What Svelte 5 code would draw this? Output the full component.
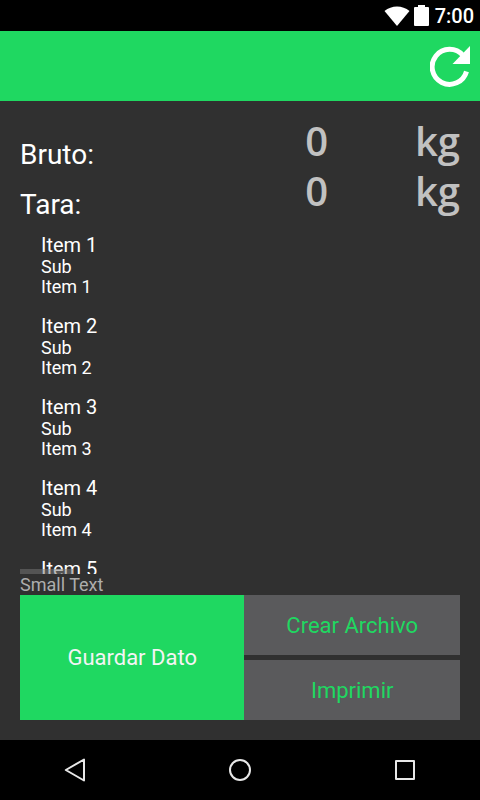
<script lang="ts">
	interface Reading {
		label: string;
		value: number;
		unit: string;
	}

	let readings = $state<Reading[]>([
		{ label: 'Bruto:', value: 0, unit: 'kg' },
		{ label: 'Tara:', value: 0, unit: 'kg' }
	]);

	const items = [1, 2, 3, 4, 5];

	function reset() {
		readings = readings.map((r) => ({ ...r, value: 0 }));
	}
</script>

<div class="screen">
	<div class="status-bar">
		<svg width="26" height="20" viewBox="0 0 26 20" aria-hidden="true">
			<path d="M13 20 L0.5 5 C7.5 -1 18.5 -1 25.5 5 Z" fill="#fff" />
		</svg>
		<svg class="battery" width="15" height="21" viewBox="0 0 15 21" aria-hidden="true">
			<path d="M1 2 H4 V0 H11 V2 H14 Q15 2 15 3 V20 Q15 21 14 21 H1 Q0 21 0 20 V3 Q0 2 1 2 Z" fill="#fff" />
		</svg>
		<span class="clock">7:00</span>
	</div>

	<header class="toolbar">
		<button type="button" aria-label="Actualizar" onclick={reset}>
			<svg width="40" height="41" viewBox="0 0 40 41" aria-hidden="true">
				<path d="M33 9.5 A17.5 17.5 0 1 0 36.5 25.5" fill="none" stroke="#fff" stroke-width="5" />
				<path d="M40 0 V18 H22.5 Z" fill="#fff" />
			</svg>
		</button>
	</header>

	<main>
		{#each readings as reading (reading.label)}
			<div class="reading">
				<span class="label">{reading.label}</span>
				<span class="value">{reading.value}</span>
				<span class="unit">{reading.unit}</span>
			</div>
		{/each}

		<div class="list-wrap">
			<ul class="list">
				{#each items as n (n)}
					<li>
						<span class="title">Item {n}</span>
						{#if n < items.length}
							<span class="sub">Sub<br />Item {n}</span>
						{/if}
					</li>
				{/each}
			</ul>
			<div class="scroll-thumb"></div>
		</div>

		<p class="small-text">Small Text</p>

		<div class="actions">
			<button type="button" class="btn-save">Guardar Dato</button>
			<div class="side">
				<button type="button" class="btn-secondary">Crear Archivo</button>
				<button type="button" class="btn-secondary">Imprimir</button>
			</div>
		</div>
	</main>

	<nav class="nav-bar">
		<button type="button" aria-label="Atrás">
			<svg width="24" height="24" viewBox="0 0 24 24" aria-hidden="true">
				<path d="M21 1.5 V22.5 L2.8 12 Z" />
			</svg>
		</button>
		<button type="button" aria-label="Inicio">
			<svg width="24" height="24" viewBox="0 0 24 24" aria-hidden="true">
				<circle cx="12" cy="12" r="10" />
			</svg>
		</button>
		<button type="button" aria-label="Recientes">
			<svg width="24" height="24" viewBox="0 0 24 24" aria-hidden="true">
				<rect x="3" y="3" width="18" height="18" />
			</svg>
		</button>
	</nav>
</div>

<style>
	:global(body) {
		margin: 0;
		background: #303030;
	}

	.screen {
		display: flex;
		flex-direction: column;
		height: 100vh;
		background: #303030;
		color: #fff;
		font-family: Roboto, sans-serif;
	}

	button {
		margin: 0;
		padding: 0;
		border: none;
		background: none;
		font-family: inherit;
		cursor: pointer;
	}

	svg {
		display: block;
	}

	.status-bar {
		display: flex;
		align-items: center;
		justify-content: flex-end;
		height: 31px;
		padding-right: 6px;
		background: #000;
	}

	.battery {
		margin: 0 6px 0 4px;
	}

	.clock {
		font-size: 20px;
		font-weight: 500;
		line-height: 32px;
	}

	.toolbar {
		display: flex;
		align-items: center;
		justify-content: flex-end;
		height: 70px;
		padding-right: 10px;
		background: #1fd861;
	}

	main {
		display: flex;
		flex: 1;
		flex-direction: column;
		min-height: 0;
		padding: 20px;
	}

	.reading {
		display: grid;
		grid-template-columns: 1fr auto 132px;
		height: 50px;
	}

	.label {
		align-self: end;
		font-size: 28px;
		line-height: 32px;
	}

	.value,
	.unit {
		font-family: 'Open Sans', sans-serif;
		font-size: 40px;
		font-weight: 600;
		line-height: 40px;
		color: #c1c1c1;
		text-align: right;
	}

	.list-wrap {
		position: relative;
		flex: 1;
		min-height: 0;
		overflow: hidden;
	}

	.list {
		margin: 0;
		padding: 1px 21px 0;
		list-style: none;
	}

	li {
		padding: 11px 0 6px;
	}

	.title,
	.sub {
		display: block;
	}

	.title {
		font-size: 20px;
		line-height: 24px;
	}

	.sub {
		font-size: 18px;
		line-height: 20px;
	}

	.scroll-thumb {
		position: absolute;
		bottom: 0;
		left: 0;
		width: 12%;
		height: 5px;
		background: rgba(120, 120, 120, 0.5);
	}

	.small-text {
		margin: 0;
		font-size: 18px;
		line-height: 21px;
		color: #adadad;
	}

	.actions {
		display: grid;
		grid-template-columns: 51fr 49fr;
	}

	.side {
		display: grid;
		gap: 5px;
	}

	.btn-save,
	.btn-secondary {
		font-size: 22px;
	}

	.btn-save {
		background: #1fd861;
		color: #f4f4f4;
	}

	.btn-secondary {
		height: 60px;
		background: #5a5a5c;
		color: #1fd861;
	}

	.nav-bar {
		display: flex;
		align-items: center;
		justify-content: space-between;
		height: 60px;
		padding: 0 63px;
		background: #000;
	}

	.nav-bar svg {
		fill: none;
		stroke: #e8e8e8;
		stroke-width: 2;
		stroke-linejoin: round;
	}
</style>
